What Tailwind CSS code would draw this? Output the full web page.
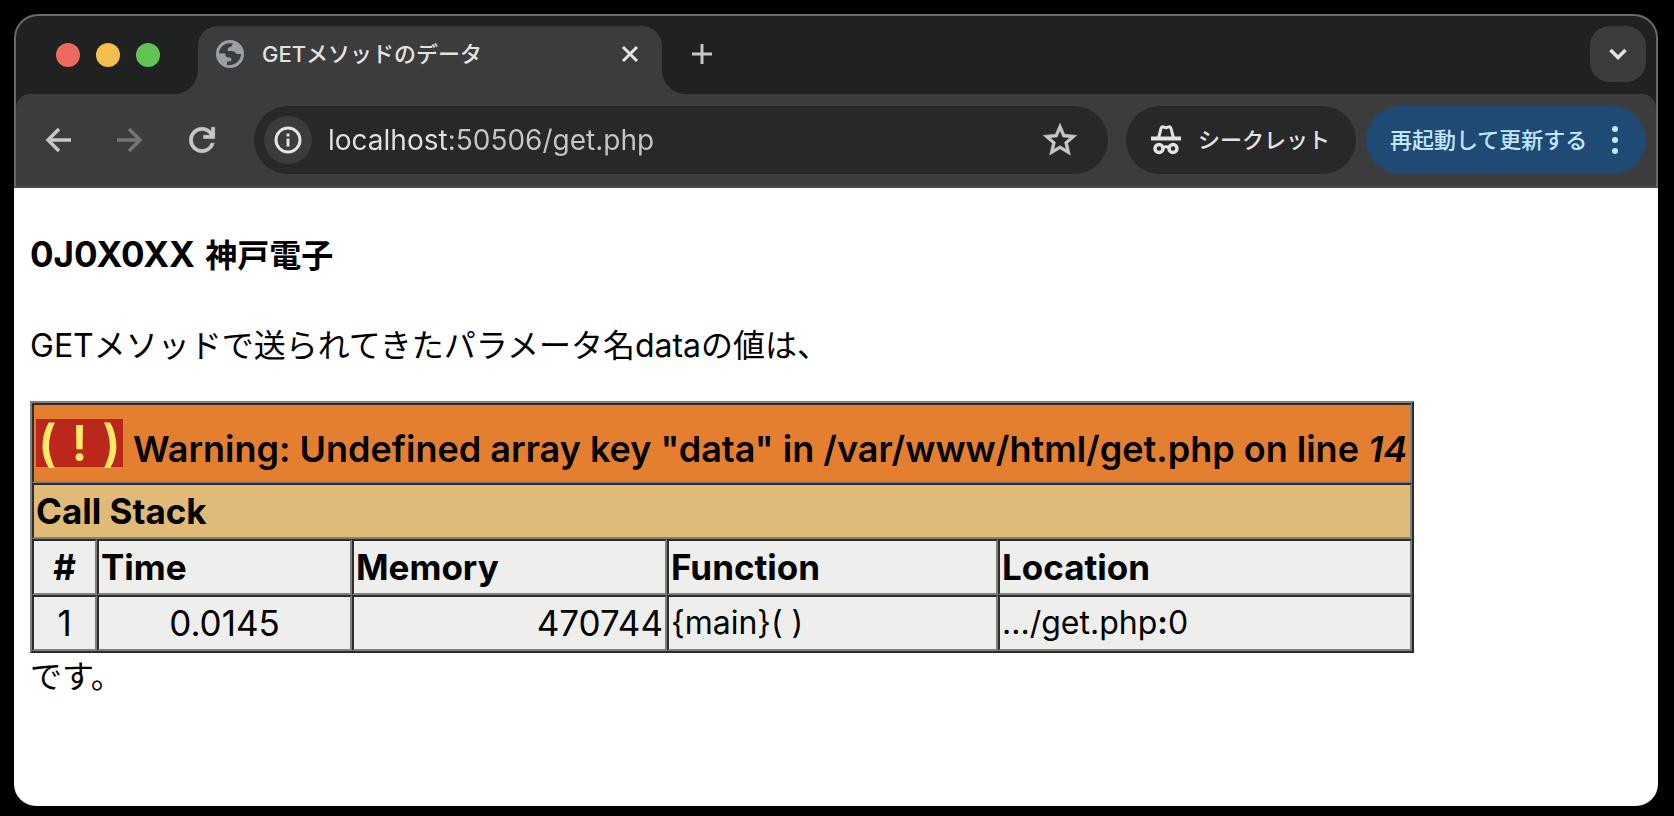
<!DOCTYPE html>
<html lang="ja">
<head>
<meta charset="utf-8">
<meta name="viewport" content="width=device-width, initial-scale=1">
<title>GETメソッドのデータ</title>
<script src="https://cdn.jsdelivr.net/npm/@tailwindcss/browser@4"></script>
</head>
<body class="min-h-screen bg-black flex flex-col pl-3.5 pr-4 pt-3.5 pb-2.5 text-black font-['Inter','Noto_Sans_CJK_JP',sans-serif]">

<header class="rounded-t-[24px] border-2 border-[#696a69] border-b-[#4a4849] bg-[#202221] overflow-hidden">
  <!-- Tab strip -->
  <div class="flex h-[78px] items-start pt-2.5 pl-10 pr-2.5">
    <div class="flex gap-4 pt-[17px] mr-[38px]">
      <button aria-label="閉じる" class="size-6 rounded-full bg-[#ed6a5f]"></button>
      <button aria-label="しまう" class="size-6 rounded-full bg-[#f5bf4f]"></button>
      <button aria-label="拡大" class="size-6 rounded-full bg-[#61c554]"></button>
    </div>
    <div class="relative flex w-[464px] h-[68px] items-start rounded-t-[20px] bg-[#3c3c3c] pl-[18px] pr-[18px]">
      <svg class="absolute bottom-0 -left-6 size-6" viewBox="0 0 24 24" aria-hidden="true"><path d="M24 0v24H0C13.300 24 24 13.300 24 0z" fill="#3c3c3c"/></svg>
      <svg class="absolute bottom-0 -right-6 size-6" viewBox="0 0 24 24" aria-hidden="true"><path d="M0 0v24h24C10.700 24 0 13.300 0 0z" fill="#3c3c3c"/></svg>
      <div class="flex w-full h-14 items-center">
        <svg class="size-7 shrink-0" viewBox="0 0 28 28" aria-hidden="true"><path fill="#9aa0a6" fill-rule="evenodd" d="M14 0a14 14 0 1 1 0 28a14 14 0 1 1 0-28zM3 13.500C3 8 7.500 3.500 13 3.200h3.500c.2 2-.8 3.600-2.800 4-1.500.3-2 .9-2 2.300v1.400h3.500c2.800 0 4.600 1 5 3.100H25c0 5.700-4.500 10.500-10.200 10.900H11v-3.500h2.700c2.200 0 2.300-3.600 0-4h-1.800c-2-.1-2.600-1.600-2.700-3.900z"/></svg>
        <span class="ml-[18px] text-[22px] leading-8 font-medium text-[#e3e3e3] whitespace-nowrap">GETメソッドのデータ</span>
        <button aria-label="タブを閉じる" class="ml-auto size-7 flex items-center justify-center"><svg class="size-5" viewBox="0 0 20 20" fill="none" stroke="#e3e3e3" stroke-width="3"><path d="M3 3l14 14M17 3L3 17"/></svg></button>
      </div>
    </div>
    <button aria-label="新しいタブ" class="ml-[26px] flex h-14 w-7 items-center justify-center"><svg class="size-5" viewBox="0 0 20 20" fill="none" stroke="#c7c7c7" stroke-width="3"><path d="M10 0v20M0 10h20"/></svg></button>
    <button aria-label="タブを検索" class="ml-auto flex size-14 items-center justify-center rounded-[20px] bg-[#3c3c3c]"><svg class="size-5" viewBox="0 0 20 20" fill="none" stroke="#e3e3e3" stroke-width="3.500"><path d="M2.500 6l7.500 7.500L17.500 6"/></svg></button>
  </div>
  <!-- Toolbar -->
  <div class="flex h-[92px] items-start rounded-t-[14px] bg-[#3c3c3c] pt-3 pl-3.5 pr-2.5">
    <div class="flex gap-4 mr-6">
      <button aria-label="戻る" class="flex h-[68px] w-14 items-center justify-center"><svg class="size-7" viewBox="0 0 28 28" fill="none" stroke="#c7c7c7" stroke-width="3.500"><path d="M27 14H4M15 3L4 14l11 11"/></svg></button>
      <button aria-label="進む" class="flex h-[68px] w-14 items-center justify-center" disabled><svg class="size-7" viewBox="0 0 28 28" fill="none" stroke="#757575" stroke-width="3.500"><path d="M1 14h23M13 3l11 11-11 11"/></svg></button>
      <button aria-label="再読み込み" class="flex h-[68px] w-14 items-center justify-center"><svg class="size-[38px]" viewBox="0 0 24 24" fill="#c7c7c7" stroke="#c7c7c7" stroke-width=".4"><path d="M12 20q-3.350 0-5.675-2.325T4 12t2.325-5.675T12 4q1.725 0 3.300.712T18 6.750V4h2v7h-7V9h4.200q-.8-1.400-2.187-2.200T12 6Q9.500 6 7.750 7.750T6 12t1.750 4.250T12 18q1.925 0 3.475-1.100T17.650 14h2.100q-.7 2.650-2.850 4.325T12 20"/></svg></button>
    </div>
    <div class="flex min-w-0 flex-1 h-[68px] items-center rounded-full bg-[#282828] pl-2.5 pr-7">
      <button aria-label="サイト情報を表示" class="flex size-12 shrink-0 items-center justify-center rounded-full bg-[#3c3c3c]"><svg class="size-7" viewBox="0 0 28 28" fill="none" stroke="#e3e3e3" stroke-width="3"><circle cx="14" cy="14" r="12"/><path d="M14 12.500v8M14 7.500v3"/></svg></button>
      <input aria-label="アドレス" type="text" value="localhost:50506/get.php" class="ml-4 min-w-0 flex-1 h-10 text-[28px] bg-[linear-gradient(90deg,#e3e3e3_119px,#c7c7c7_119px)] bg-clip-text text-transparent outline-none">
      <button aria-label="ブックマークに追加" class="flex size-10 shrink-0 items-center justify-center"><svg class="size-10" viewBox="0 0 24 24" fill="#c7c7c7" stroke="#c7c7c7" stroke-width=".4"><path d="M22 9.240l-7.190-.62L12 2 9.190 8.630 2 9.240l5.460 4.730L5.820 21 12 17.270 18.180 21l-1.630-7.030L22 9.240zM12 15.400l-3.760 2.270 1-4.280-3.320-2.880 4.380-.38L12 6.100l1.710 4.040 4.380.38-3.320 2.880 1 4.280L12 15.400z"/></svg></button>
    </div>
    <button class="ml-[18px] flex h-[68px] w-[230px] items-center rounded-full bg-[#282828] pl-[25px] text-[22px] leading-8 font-medium text-[#e3e3e3] whitespace-nowrap">
      <svg class="mr-[17px] size-[30px] shrink-0" viewBox="0 0 30 30" fill="none" stroke="#e3e3e3" aria-hidden="true"><path d="M0 13.500h30" stroke-width="4"/><path d="M7.500 13L10 3.500c.4-1.600 1.600-2 3-1.300 1.400.7 2.600.7 4 0 1.400-.7 2.600-.3 3 1.300L22.500 13" stroke-width="3"/><circle cx="8" cy="23.500" r="4" stroke-width="3.500"/><circle cx="22" cy="23.500" r="4" stroke-width="3.500"/><path d="M12 22.500q3-1.500 6 0" stroke-width="3"/></svg>
      シークレット
    </button>
    <button class="ml-2.5 flex h-[68px] w-[280px] items-center rounded-full bg-[#1f4a73] pl-6 text-[22px] leading-8 font-medium text-[#c2e7ff] whitespace-nowrap">
      再起動して更新する
      <svg class="ml-6 h-7 w-2 shrink-0" viewBox="0 0 8 28" fill="#c2e7ff" aria-hidden="true"><circle cx="4" cy="3" r="3"/><circle cx="4" cy="14" r="3"/><circle cx="4" cy="25" r="3"/></svg>
    </button>
  </div>
</header>

<main class="flex-1 rounded-b-[22px] bg-white px-4 pt-[42px] pb-10">
  <h1 class="text-[35px] leading-[48px] font-bold">0J0X0XX <span class="ml-0.5 text-[32px]">神戸電子</span></h1>
  <p class="mt-[42px] mb-[31px] text-[32px] leading-[48px]">GETメソッドで送られてきたパラメータ名dataの値は、</p>
  <table class="w-[1384px] max-w-full table-fixed border-separate border-spacing-0 border-2 border-t-[#808080] border-l-[#808080] border-r-[#2c2c2c] border-b-[#2c2c2c] text-[35px] leading-[48px] text-left whitespace-nowrap *:*:*:border-2 *:*:*:border-t-[#2c2c2c] *:*:*:border-l-[#2c2c2c] *:*:*:border-r-[#808080] *:*:*:border-b-[#808080] *:*:*:px-0.5 *:*:*:py-0 *:*:*:bg-[#eeeeec]">
    <colgroup><col class="w-[65px]"><col class="w-[255px]"><col class="w-[315px]"><col class="w-[331px]"><col></colgroup>
    <thead>
      <tr class="h-20"><th colspan="5" scope="colgroup" class="bg-[#e57f30]! text-[36px] font-semibold"><div class="flex h-[72px] items-center pt-3"><span class="mr-2.5 -mt-3 flex h-12 w-[87px] shrink-0 items-center justify-between bg-[#bb281b] px-0.5 text-[50px] text-[#fce96a]"><span>(</span><span>!</span><span>)</span></span><span>Warning: Undefined array key "data" in /var/www/html/get.php on line <i>14</i></span></div></th></tr>
      <tr class="h-14"><th colspan="5" scope="colgroup" class="bg-[#e0ba78]! font-bold">Call Stack</th></tr>
      <tr class="h-14"><th scope="col" class="text-center font-bold">#</th><th scope="col" class="font-bold">Time</th><th scope="col" class="font-bold">Memory</th><th scope="col" class="font-bold">Function</th><th scope="col" class="font-bold">Location</th></tr>
    </thead>
    <tbody>
      <tr class="h-14"><td class="text-center">1</td><td class="text-center">0.0145</td><td class="text-right">470744</td><td class="text-[32px]">{main}( )</td><td class="text-[32px]">.../get.php<b>:</b>0</td></tr>
    </tbody>
  </table>
  <p class="text-[32px] leading-[48px]">です。</p>
</main>
</body>
</html>
